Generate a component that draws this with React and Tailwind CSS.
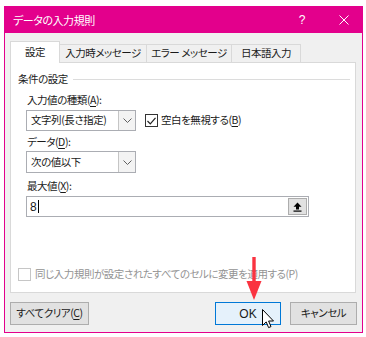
import React from 'react';

const U = ({ children }) => <span className="underline underline-offset-[2px]">{children}</span>;

const Chevron = () => (
  <svg width="9" height="5" viewBox="0 0 9 5">
    <path d="M0.5 0.5 L4.5 4.5 L8.5 0.5" fill="none" stroke="#606060" strokeWidth="1" />
  </svg>
);

const Combo = ({ value, className }) => (
  <div className={`flex w-[110px] border border-[#abadb3] bg-white ${className}`}>
    <div className="flex-1 flex items-center pl-[4px]">{value}</div>
    <div className="w-[17px] flex items-center justify-center border-l border-[#c5c5c5] bg-[#f3f3f3]">
      <Chevron />
    </div>
  </div>
);

const Tab = ({ label, w }) => (
  <div className={`h-[18px] flex items-center justify-center border-t border-r border-[#d9d9d9] bg-[#f0f0f0] ${w}`}>
    {label}
  </div>
);

const Button = ({ children, className }) => (
  <div className={`h-[23px] flex items-center justify-center border ${className}`}>{children}</div>
);

export default function App() {
  return (
    <div className="relative w-[366px] h-[337px] overflow-hidden bg-white pl-[4px] pt-[6px] text-[10.5px] tracking-[-0.45px] leading-none text-[#1a1a1a] font-['Noto_Sans_CJK_JP',sans-serif] [font-feature-settings:'palt']">
      <div className="w-[359px] h-[327px] flex flex-col border border-[#e3008c] bg-[#f0f0f0]">
        {/* title bar */}
        <div className="h-[26px] shrink-0 flex items-center bg-[#e3008c] text-white pl-[8px] pr-[4px]">
          <span className="text-[11px]">データの入力規則</span>
          <span className="ml-auto w-[28px] text-center text-[12px] tracking-normal font-['Liberation_Sans',sans-serif]">?</span>
          <span className="ml-[14px] w-[28px] flex justify-center">
            <svg width="10" height="10" viewBox="0 0 10 10">
              <path d="M0.5 0.5 L9.5 9.5 M9.5 0.5 L0.5 9.5" stroke="white" strokeWidth="1" />
            </svg>
          </span>
        </div>

        {/* tabs */}
        <div className="relative z-10 mt-[8px] ml-[5px] h-[21px] flex items-end">
          <div className="w-[50px] h-[22px] -mb-px flex items-center justify-center bg-white border border-b-0 border-[#d9d9d9]">
            設定
          </div>
          <Tab label="入力時メッセージ" w="w-[87px]" />
          <Tab label="エラー メッセージ" w="w-[85px]" />
          <Tab label="日本語入力" w="w-[69px]" />
        </div>

        {/* panel */}
        <div className="ml-[5px] w-[346px] h-[231px] shrink-0 flex flex-col border border-[#d9d9d9] bg-white">
          <div className="mt-[9px] h-[14px] flex items-center pl-[7px] pr-[5px]">
            <span>条件の設定</span>
            <div className="ml-[5px] flex-1 h-px bg-[#dcdcdc]" />
          </div>

          <div className="pl-[15px] flex flex-col">
            <div className="mt-[7px] h-[14px] flex items-center pl-px">
              入力値の種類(<U>A</U>):
            </div>
            <div className="mt-[3px] h-[21px] flex items-center">
              <Combo value="文字列(長さ指定)" className="h-[21px]" />
              <div className="ml-[9px] w-[13px] h-[13px] border border-[#333] bg-white flex items-center justify-center">
                <svg width="9" height="8" viewBox="0 0 9 8">
                  <path d="M0.5 4 L3.3 6.8 L8.5 0.8" fill="none" stroke="#222" strokeWidth="1.2" />
                </svg>
              </div>
              <span className="ml-[3px]">空白を無視する(<U>B</U>)</span>
            </div>
            <div className="mt-[4px] h-[14px] flex items-center pl-px">
              データ(<U>D</U>):
            </div>
            <Combo value="次の値以下" className="mt-[2px] h-[22px]" />
            <div className="mt-[6px] h-[14px] flex items-center pl-px">
              最大値(<U>X</U>):
            </div>
            <div className="mt-[3px] w-[283px] h-[21px] flex border border-[#abadb3] bg-white">
              <div className="flex-1 flex items-center pl-[3px] font-['Liberation_Sans',sans-serif] text-[12px] tracking-normal">
                8<span className="ml-px w-px h-[13px] bg-black" />
              </div>
              <div className="w-[19px] m-px flex items-center justify-center border border-[#adadad] bg-[#e1e1e1]">
                <svg width="9" height="10" viewBox="0 0 9 10">
                  <path d="M4.5 0.5 L8.5 4.8 L6 4.8 L6 7.5 L3 7.5 L3 4.8 L0.5 4.8 Z" fill="#000" />
                  <rect x="0.5" y="8.5" width="8" height="1.2" fill="#000" />
                </svg>
              </div>
            </div>
          </div>

          <div className="mt-auto mb-[11px] h-[14px] flex items-center pl-[7px] text-[#939393]">
            <div className="w-[13px] h-[13px] border border-[#c6c6c6] bg-white" />
            <span className="ml-[4px]">同じ入力規則が設定されたすべてのセルに変更を適用する(P)</span>
          </div>
        </div>

        {/* buttons */}
        <div className="mt-[9px] mx-[5px] flex">
          <Button className="w-[79px] border-[#adadad] bg-[#e1e1e1]">
            すべてクリア(<U>C</U>)
          </Button>
          <Button className="ml-auto w-[66px] border-[#0078d7] bg-[#e5f1fb] font-['Liberation_Sans',sans-serif] text-[12px] tracking-normal">
            OK
          </Button>
          <Button className="ml-[9px] w-[67px] border-[#adadad] bg-[#e1e1e1]">
            キャンセル
          </Button>
        </div>
      </div>

      {/* red arrow annotation */}
      <svg className="absolute left-[246px] top-[257px]" width="16" height="44" viewBox="0 0 16 44">
        <rect x="6.3" y="0" width="3.4" height="26" fill="#fa3340" />
        <path d="M0.5 24 L15.5 24 L8 43 Z" fill="#fa3340" />
      </svg>

      {/* mouse cursor */}
      <svg className="absolute left-[262px] top-[309px]" width="13" height="21" viewBox="0 0 13 21">
        <path
          d="M0.5 0.5 L0.5 16.5 L4.2 12.9 L6.6 18.6 L9 17.6 L6.6 12 L11.5 12 Z"
          fill="white"
          stroke="black"
          strokeWidth="1"
          strokeLinejoin="miter"
        />
      </svg>
    </div>
  );
}
